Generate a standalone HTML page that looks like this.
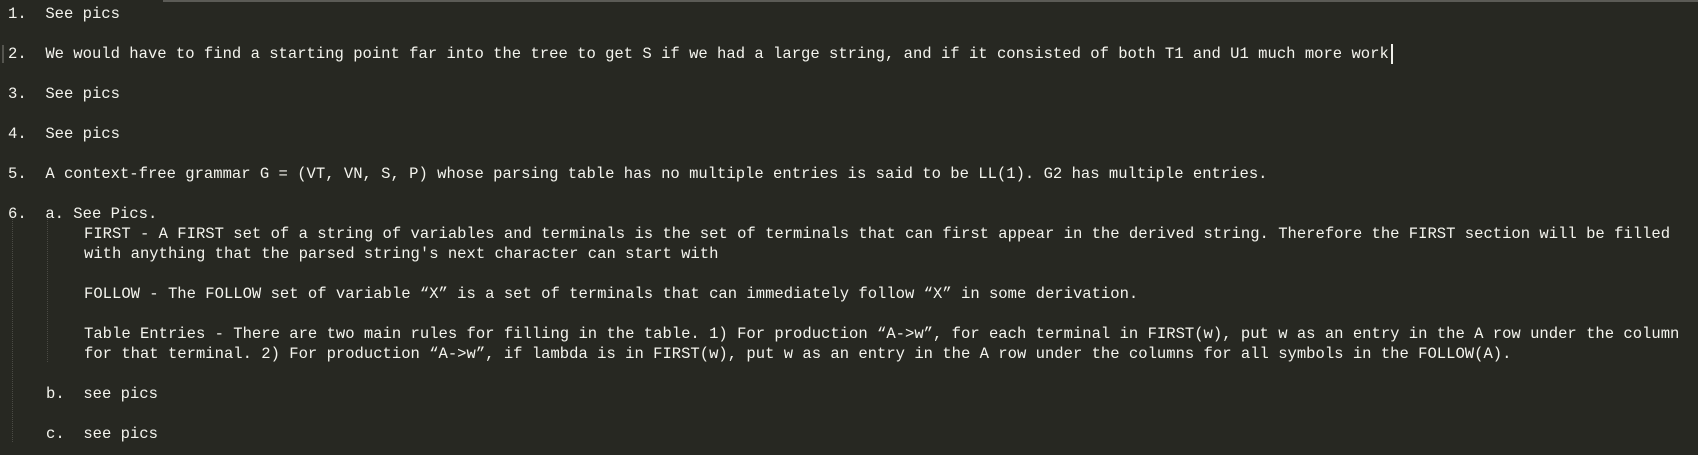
<!DOCTYPE html>
<html><head><style>
html,body{margin:0;padding:0;background:#272822;width:1698px;height:455px;overflow:hidden}
.l{position:absolute;white-space:pre;font-family:"Liberation Mono",monospace;font-size:15.56px;line-height:20px;color:#f4f4ee}
.top{position:absolute;left:163px;top:0;width:1535px;height:2px;background:#5b5b56}
.mark{position:absolute;left:2px;top:45px;width:2px;height:18px;background:#55554f}
.g{position:absolute;width:0;border-left:1px dotted #4a4a44}
.cur{position:absolute;left:1391px;top:44px;width:2px;height:20px;background:#f0f0ea}
</style></head><body>
<div class="top"></div><div class="mark"></div><div class="cur"></div>
<div class="g" style="left:12px;top:216px;height:226px"></div>
<div class="g" style="left:47px;top:216px;height:146px"></div>
<div class="l" style="left:8px;top:4px">1.  See pics</div>
<div class="l" style="left:8px;top:44px">2.  We would have to find a starting point far into the tree to get S if we had a large string, and if it consisted of both T1 and U1 much more work</div>
<div class="l" style="left:8px;top:84px">3.  See pics</div>
<div class="l" style="left:8px;top:124px">4.  See pics</div>
<div class="l" style="left:8px;top:164px">5.  A context-free grammar G = (VT, VN, S, P) whose parsing table has no multiple entries is said to be LL(1). G2 has multiple entries.</div>
<div class="l" style="left:8px;top:204px">6.  a. See Pics.</div>
<div class="l" style="left:84px;top:224px">FIRST - A FIRST set of a string of variables and terminals is the set of terminals that can first appear in the derived string. Therefore the FIRST section will be filled</div>
<div class="l" style="left:84px;top:244px">with anything that the parsed string's next character can start with</div>
<div class="l" style="left:84px;top:284px">FOLLOW - The FOLLOW set of variable “X” is a set of terminals that can immediately follow “X” in some derivation.</div>
<div class="l" style="left:84px;top:324px">Table Entries - There are two main rules for filling in the table. 1) For production “A-&gt;w”, for each terminal in FIRST(w), put w as an entry in the A row under the column</div>
<div class="l" style="left:84px;top:344px">for that terminal. 2) For production “A-&gt;w”, if lambda is in FIRST(w), put w as an entry in the A row under the columns for all symbols in the FOLLOW(A).</div>
<div class="l" style="left:46px;top:384px">b.  see pics</div>
<div class="l" style="left:46px;top:424px">c.  see pics</div>
</body></html>
